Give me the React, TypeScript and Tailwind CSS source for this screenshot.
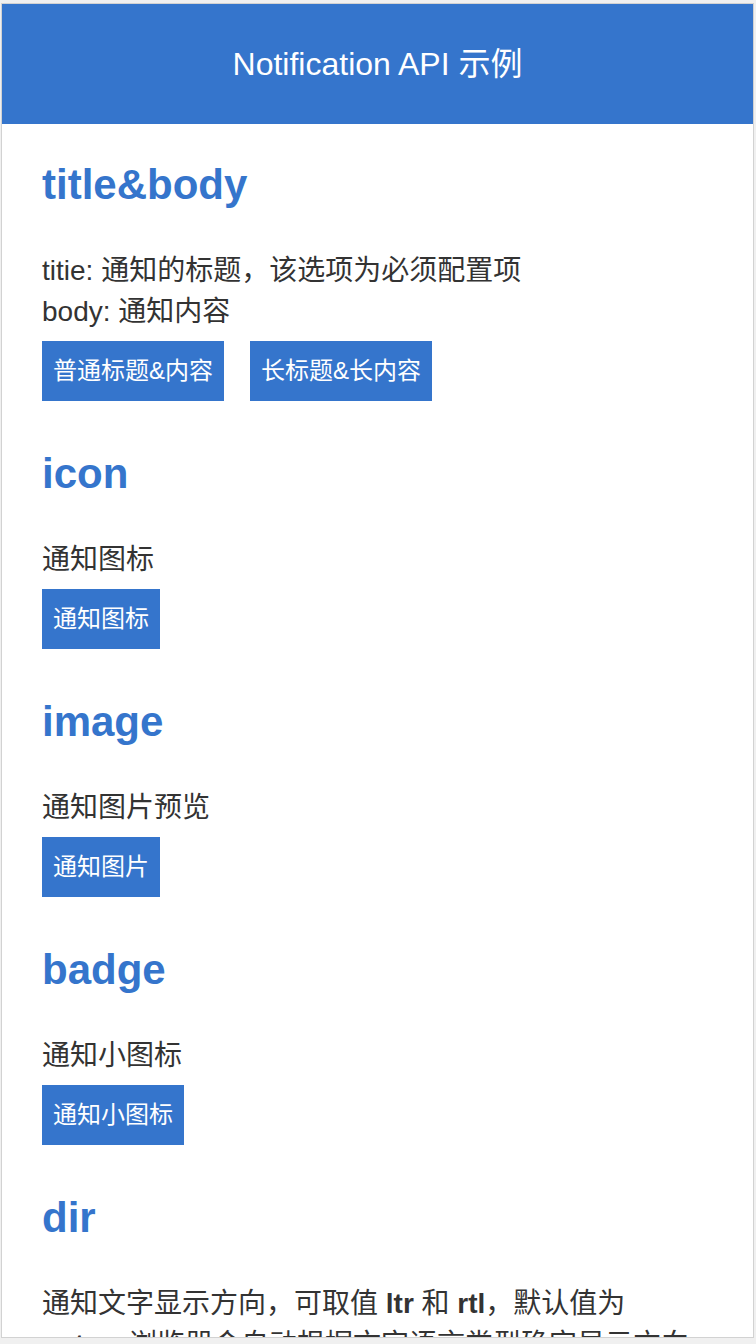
import type { ReactNode } from "react";

const font = {
  fontFamily: '"Liberation Sans", "Noto Sans CJK SC", sans-serif',
};

type Section = {
  title: string;
  desc: ReactNode;
  buttons: string[];
};

const sections: Section[] = [
  {
    title: "title&body",
    desc: (
      <>
        titie: 通知的标题，该选项为必须配置项
        <br />
        body: 通知内容
      </>
    ),
    buttons: ["普通标题&内容", "长标题&长内容"],
  },
  { title: "icon", desc: "通知图标", buttons: ["通知图标"] },
  { title: "image", desc: "通知图片预览", buttons: ["通知图片"] },
  { title: "badge", desc: "通知小图标", buttons: ["通知小图标"] },
  {
    title: "dir",
    desc: (
      <>
        通知文字显示方向，可取值 <b>ltr</b> 和 <b>rtl</b>，默认值为{" "}
        <b>auto</b>，浏览器会自动根据文字语言类型确定显示方向
      </>
    ),
    buttons: [],
  },
];

function Button({ label }: { label: string }) {
  return (
    <button className="flex h-[60px] items-center bg-[#3575cc] px-[11px] text-[24px] leading-[30px] text-white">
      {label}
    </button>
  );
}

function DemoSection({ section }: { section: Section }) {
  return (
    <section className="flex flex-col">
      <h2 className="text-[42px] font-bold leading-[50px] text-[#3575cc]">
        {section.title}
      </h2>
      <p className="mt-[40px] text-[28px] leading-[41px] text-[#333333]">
        {section.desc}
      </p>
      {section.buttons.length > 0 && (
        <div className="mt-[9px] flex flex-row gap-[26px]">
          {section.buttons.map((label) => (
            <Button key={label} label={label} />
          ))}
        </div>
      )}
    </section>
  );
}

export default function App() {
  return (
    <div
      className="h-[1344px] overflow-hidden bg-[#f0f0f0] pt-[3px] pl-[1px] pr-[2px]"
      style={font}
    >
      <div className="flex h-[1335px] flex-col overflow-hidden border border-[#d2d2d2] bg-white">
        <header className="flex h-[120px] shrink-0 items-center justify-center bg-[#3575cc]">
          <h1 className="text-[32px] leading-[40px] text-white">
            Notification API 示例
          </h1>
        </header>
        <main className="flex flex-col gap-[48px] pt-[36px] pl-[40px] pr-[48px]">
          {sections.map((section) => (
            <DemoSection key={section.title} section={section} />
          ))}
        </main>
      </div>
    </div>
  );
}
